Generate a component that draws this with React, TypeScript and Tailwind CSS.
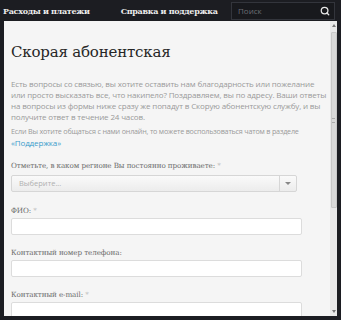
import { Search } from 'lucide-react';

const slab = { fontFamily: '"DejaVu Serif", "Liberation Serif", serif' };
const sans = { fontFamily: '"Open Sans", "Liberation Sans", sans-serif' };

function Label({ text, required }: { text: string; required?: boolean }) {
  return (
    <div className="text-[7.2px] leading-[12px] text-[#6a6a6a] tracking-[-0.1px]" style={slab}>
      {text}
      {required && <span className="text-[#bbb]"> *</span>}
    </div>
  );
}

function Field({ label, required }: { label: string; required?: boolean }) {
  return (
    <div className="flex flex-col">
      <Label text={label} required={required} />
      <div className="mt-[1px] h-[17px] w-[291px] rounded-[2px] border border-[#dcdcdc] bg-white" />
    </div>
  );
}

export default function App() {
  return (
    <div className="flex h-[320px] w-[341px] flex-col overflow-hidden bg-[#1c1d22]">
      <div className="flex h-[21px] items-center pl-[3px] pr-[6px]">
        <span className="text-[8px] font-bold tracking-[-0.3px] text-[#ececec]" style={slab}>
          Расходы и платежи
        </span>
        <span className="ml-[31px] text-[8px] font-bold tracking-[-0.3px] text-[#ececec]" style={slab}>
          Справка и поддержка
        </span>
        <div className="ml-auto flex h-[18px] w-[104px] items-center justify-between border border-[#33353c] bg-[#18191d] pl-[6px] pr-[4px]">
          <span className="text-[8px] text-[#6b6d74]" style={sans}>Поиск</span>
          <Search className="size-[10px] text-[#e8e8e8]" strokeWidth={3} />
        </div>
      </div>

      <div className="mx-[4px] flex h-[295px] overflow-hidden bg-[#f5f5f5]">
        <div className="flex-1 pl-[7px] pt-[18px]">
          <h1 className="text-[15px] leading-[26px] tracking-[-0.2px] text-[#262626]" style={slab}>
            Скорая абонентская
          </h1>
          <div className="mt-[13px] text-[8px] leading-[11px] text-[#9a9a9a] whitespace-nowrap tracking-[-0.15px]" style={sans}>
            <p>Есть вопросы со связью, вы хотите оставить нам благодарность или пожелание</p>
            <p>или просто высказать все, что накипело? Поздравляем, вы по адресу. Ваши ответы</p>
            <p>на вопросы из формы ниже сразу же попадут в Скорую абонентскую службу, и вы</p>
            <p>получите ответ в течение 24 часов.</p>
            <p className="mt-[3.5px] text-[7.2px] tracking-[-0.2px]">
              Если Вы хотите общаться с нами онлайн, то можете воспользоваться чатом в разделе
            </p>
            <p className="text-[#3a9ccb]">«Поддержка»</p>
          </div>

          <div className="mt-[12.5px] flex flex-col">
            <Label text="Отметьте, в каком регионе Вы постоянно проживаете:" required />
            <div className="mt-[3px] flex h-[17px] w-[286px] items-stretch rounded-[2px] border border-[#d6d6d6] bg-gradient-to-b from-[#fafafa] to-[#ececec]">
              <span className="flex flex-1 items-center pl-[7px] text-[7.5px] text-[#b0b0b0]" style={sans}>
                Выберите...
              </span>
              <span className="flex w-[17px] items-center justify-center border-l border-[#d6d6d6]">
                <span className="h-0 w-0 border-x-[3px] border-t-[3px] border-x-transparent border-t-[#888]" />
              </span>
            </div>
          </div>

          <div className="mt-[13px] flex flex-col gap-[12px]">
            <Field label="ФИО:" required />
            <Field label="Контактный номер телефона:" />
            <Field label="Контактный e-mail:" required />
          </div>
        </div>

        <div className="flex w-[7px] flex-col items-center bg-[#e9e9e9]">
          <span className="mt-[3px] h-0 w-0 border-x-[2px] border-b-[3px] border-x-transparent border-b-[#777]" />
          <div className="mt-[5px] flex h-[176px] w-[6px] items-center justify-center rounded-[1px] border border-[#c8c8c8] bg-[#d9d9d9]">
            <span className="h-[5px] w-[3px] border-y border-[#aaa]" />
          </div>
          <span className="mb-[3px] mt-auto h-0 w-0 border-x-[2px] border-t-[3px] border-x-transparent border-t-[#777]" />
        </div>
      </div>
    </div>
  );
}
